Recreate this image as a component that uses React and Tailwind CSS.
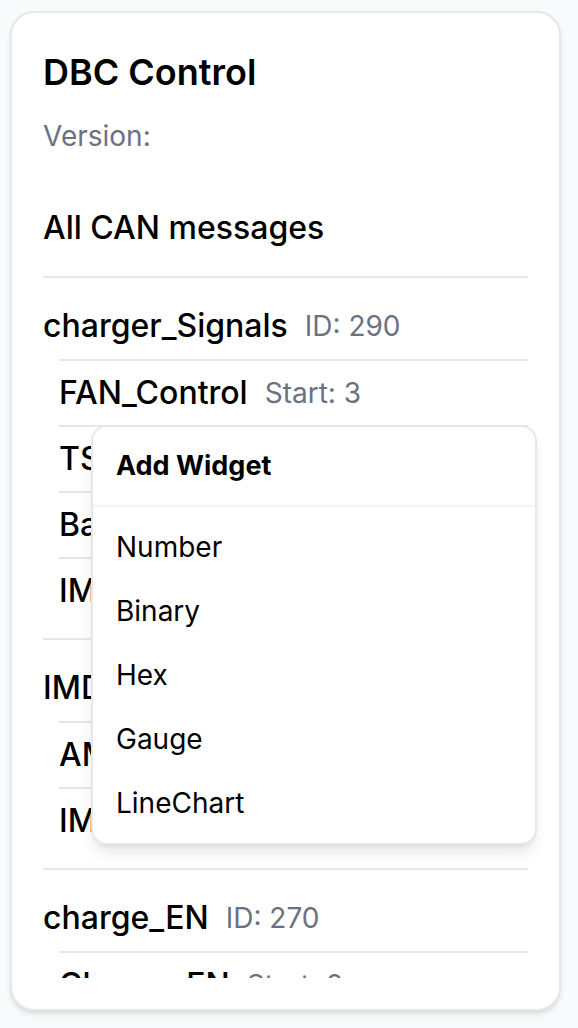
import { useState } from "react";

const messages = [
  {
    name: "charger_Signals",
    id: 290,
    signals: [
      { name: "FAN_Control", start: 3 },
      { name: "TS_Voltage", start: 8 },
      { name: "Battery_Temp", start: 16 },
      { name: "IMD_Fault", start: 24 },
    ],
  },
  {
    name: "IMD_Info",
    id: 280,
    signals: [
      { name: "AMS_Status", start: 0 },
      { name: "IMD_Status", start: 1 },
    ],
  },
  {
    name: "charge_EN",
    id: 270,
    signals: [{ name: "Charge_EN", start: 0 }],
  },
];

const widgetTypes = ["Number", "Binary", "Hex", "Gauge", "LineChart"];

const SignalRow = ({ signal }) => (
  <div className="flex h-[66px] items-center gap-[17px] border-t-2 border-gray-200">
    <span className="text-[32px] font-medium text-black">{signal.name}</span>
    <span className="text-[28px] text-gray-500">Start: {signal.start}</span>
  </div>
);

const MessageGroup = ({ message }) => (
  <div className="border-t-2 border-gray-200 py-[15px]">
    <div className="flex h-[66px] items-center gap-[17px]">
      <span className="text-[32px] font-medium text-black">{message.name}</span>
      <span className="text-[28px] text-gray-500">ID: {message.id}</span>
    </div>
    <div className="ml-[16px]">
      {message.signals.map((signal) => (
        <SignalRow key={signal.name} signal={signal} />
      ))}
    </div>
  </div>
);

const WidgetMenu = () => (
  <div className="absolute left-[79px] top-[412px] w-[446px] rounded-[16px] border-2 border-gray-200 bg-white shadow-lg">
    <div className="flex h-[80px] items-center border-b-2 border-gray-100 px-[23px]">
      <span className="text-[27px] font-bold text-black">Add Widget</span>
    </div>
    <div className="py-[8px]">
      {widgetTypes.map((type) => (
        <div key={type} className="flex h-[64px] items-center px-[23px] text-[28px] text-black">
          {type}
        </div>
      ))}
    </div>
  </div>
);

export default function App() {
  const [open] = useState(true);

  return (
    <div className="min-h-screen bg-gray-50 px-[10px] pt-[11px] font-['Inter',sans-serif]">
      <div className="relative flex h-[1000px] w-[551px] flex-col rounded-[24px] border-2 border-gray-200 bg-white px-[31px] pb-[31px] pt-[27px] shadow-md">
        <h1 className="text-[36px] font-semibold leading-[64px] text-black">DBC Control</h1>
        <p className="mt-[12px] text-[28px] leading-[40px] text-gray-500">Version:</p>
        <h2 className="mt-[48px] text-[32px] font-medium leading-[48px] text-black">All CAN messages</h2>
        <div className="mt-[24px] min-h-0 flex-1 overflow-hidden">
          {messages.map((message) => (
            <MessageGroup key={message.name} message={message} />
          ))}
        </div>
        {open && <WidgetMenu />}
      </div>
    </div>
  );
}
